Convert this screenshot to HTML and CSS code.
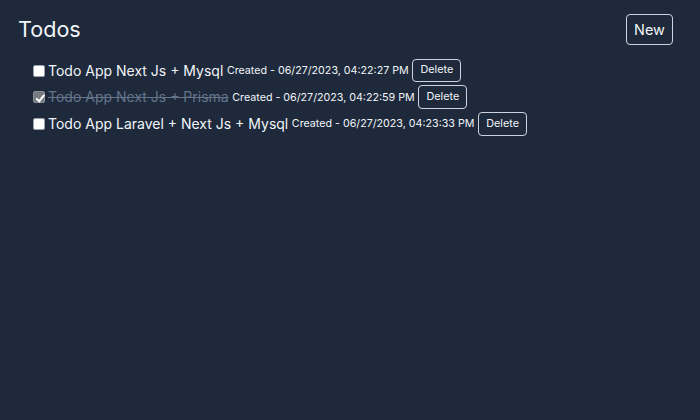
FILE: index.html
```html
<!DOCTYPE html>
<html>
<head>
<meta charset="utf-8">
<link rel="stylesheet" href="styles.css">
</head>
<body>
<div class="page">
  <header class="header">
    <h1 class="title">Todos</h1>
    <button class="btn-new">New</button>
  </header>
  <ul class="list">
    <li class="item">
      <input type="checkbox" class="check">
      <span class="label">Todo App Next Js + Mysql</span>
      <span class="meta">Created - 06/27/2023, 04:22:27 PM</span>
      <button class="btn-del">Delete</button>
    </li>
    <li class="item">
      <input type="checkbox" class="check" checked>
      <span class="label done">Todo App Next Js + Prisma</span>
      <span class="meta">Created - 06/27/2023, 04:22:59 PM</span>
      <button class="btn-del">Delete</button>
    </li>
    <li class="item">
      <input type="checkbox" class="check">
      <span class="label">Todo App Laravel + Next Js + Mysql</span>
      <span class="meta">Created - 06/27/2023, 04:23:33 PM</span>
      <button class="btn-del">Delete</button>
    </li>
  </ul>
</div>
</body>
</html>
```

FILE: styles.css
```css
html, body {
  margin: 0;
  padding: 0;
  background: #1e293b;
  color: #f1f5f9;
  font-family: Inter, "Noto Sans", sans-serif;
}
.page {
  padding: 14px 27px 0 18px;
}
.header {
  display: flex;
  justify-content: space-between;
  align-items: center;
  margin-bottom: 14px;
}
.title {
  margin: 0;
  font-size: 21.6px;
  font-weight: 400;
  line-height: 28.8px;
}
.btn-new {
  font-family: inherit;
  font-size: 14.4px;
  line-height: 21.6px;
  color: #f1f5f9;
  background: transparent;
  border: 1px solid #cbd5e1;
  border-radius: 4px;
  padding: 3.6px 7.2px;
}
.list {
  list-style: none;
  margin: 0;
  padding: 0 0 0 14px;
  display: flex;
  flex-direction: column;
  gap: 3px;
}
.item {
  display: flex;
  align-items: center;
  gap: 3.6px;
}
.check {
  appearance: none;
  -webkit-appearance: none;
  margin: 0 -0.6px 0 1px;
  width: 12px;
  height: 12px;
  background: #ffffff;
  border: 1px solid #9ca3af;
  border-radius: 2px;
  box-sizing: border-box;
  position: relative;
}
.check:checked {
  background: #767b82;
  border-color: #8b9097;
}
.check:checked::after {
  content: "";
  position: absolute;
  left: 3.5px;
  top: 0.5px;
  width: 3px;
  height: 6.5px;
  border: solid #ffffff;
  border-width: 0 2px 2px 0;
  transform: rotate(40deg);
}
.label {
  font-size: 14px;
  line-height: 21.6px;
}
.label.done {
  color: #64748b;
  text-decoration: line-through;
}
.meta {
  font-size: 10.7px;
}
.btn-del {
  font-family: inherit;
  font-size: 10.8px;
  line-height: 14.4px;
  color: #f1f5f9;
  background: transparent;
  border: 1px solid #cbd5e1;
  border-radius: 4px;
  padding: 3.6px 7.2px;
}
```
